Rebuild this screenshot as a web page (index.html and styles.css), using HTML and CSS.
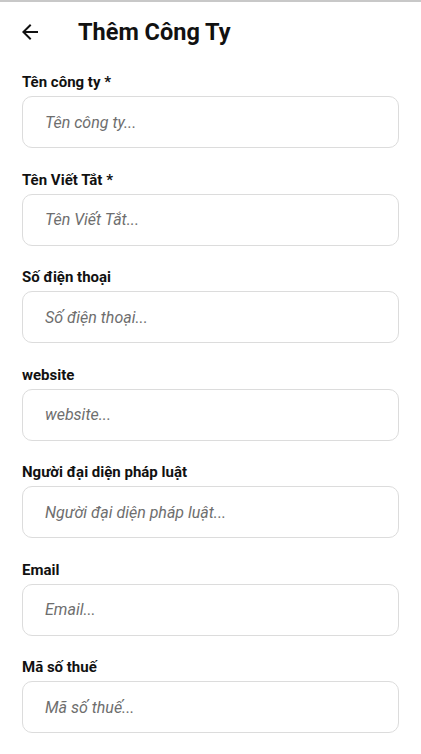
FILE: index.html
```html
<!DOCTYPE html>
<html lang="vi">
<head>
<meta charset="utf-8">
<title>Thêm Công Ty</title>
<link rel="stylesheet" href="styles.css">
</head>
<body>
<div class="topline"></div>
<header class="header">
  <button class="back" aria-label="Quay lại">
    <svg width="24" height="24" viewBox="0 0 24 24"><path d="M20 11H7.83l5.59-5.59L12 4l-8 8 8 8 1.41-1.41L7.83 13H20v-2z" fill="#111"/></svg>
  </button>
  <h1 class="title">Thêm Công Ty</h1>
</header>
<main class="form">
  <div class="field"><label class="label">Tên công ty *</label><input class="input" placeholder="Tên công ty..."></div>
  <div class="field"><label class="label">Tên Viết Tắt *</label><input class="input" placeholder="Tên Viết Tắt..."></div>
  <div class="field"><label class="label">Số điện thoại</label><input class="input" placeholder="Số điện thoại..."></div>
  <div class="field"><label class="label">website</label><input class="input" placeholder="website..."></div>
  <div class="field"><label class="label">Người đại diện pháp luật</label><input class="input" placeholder="Người đại diện pháp luật..."></div>
  <div class="field"><label class="label">Email</label><input class="input" placeholder="Email..."></div>
  <div class="field"><label class="label">Mã số thuế</label><input class="input" placeholder="Mã số thuế..."></div>
</main>
</body>
</html>
```
FILE: styles.css
```css
* { box-sizing: border-box; }
html, body { margin: 0; padding: 0; background: #fff; }
body { font-family: Roboto, "Noto Sans", sans-serif; color: #111; overflow: hidden; }
.topline { height: 2px; background: #c8c8c8; }
.header { display: flex; align-items: center; height: 60px; padding: 0 0 0 18px; }
.back { border: 0; background: none; padding: 0; width: 24px; height: 24px; display: flex; align-items: center; justify-content: center; }
.title { margin: 0 0 0 36px; font-size: 23.5px; font-weight: 700; color: #111; letter-spacing: 0; }
.form { display: flex; flex-direction: column; gap: 22.5px; padding: 11px 22px 0 22px; }
.field { display: flex; flex-direction: column; gap: 5px; }
.label { font-size: 15px; font-weight: 700; line-height: 18px; color: #111; }
.input { height: 52px; border: 1px solid #dcdcdc; border-radius: 10px; padding: 0 22px; font-family: Roboto, "Noto Sans", sans-serif; font-size: 16px; font-style: italic; color: #333; outline: none; background: #fff; }
.input::placeholder { color: #6e6e6e; font-style: italic; }
```
